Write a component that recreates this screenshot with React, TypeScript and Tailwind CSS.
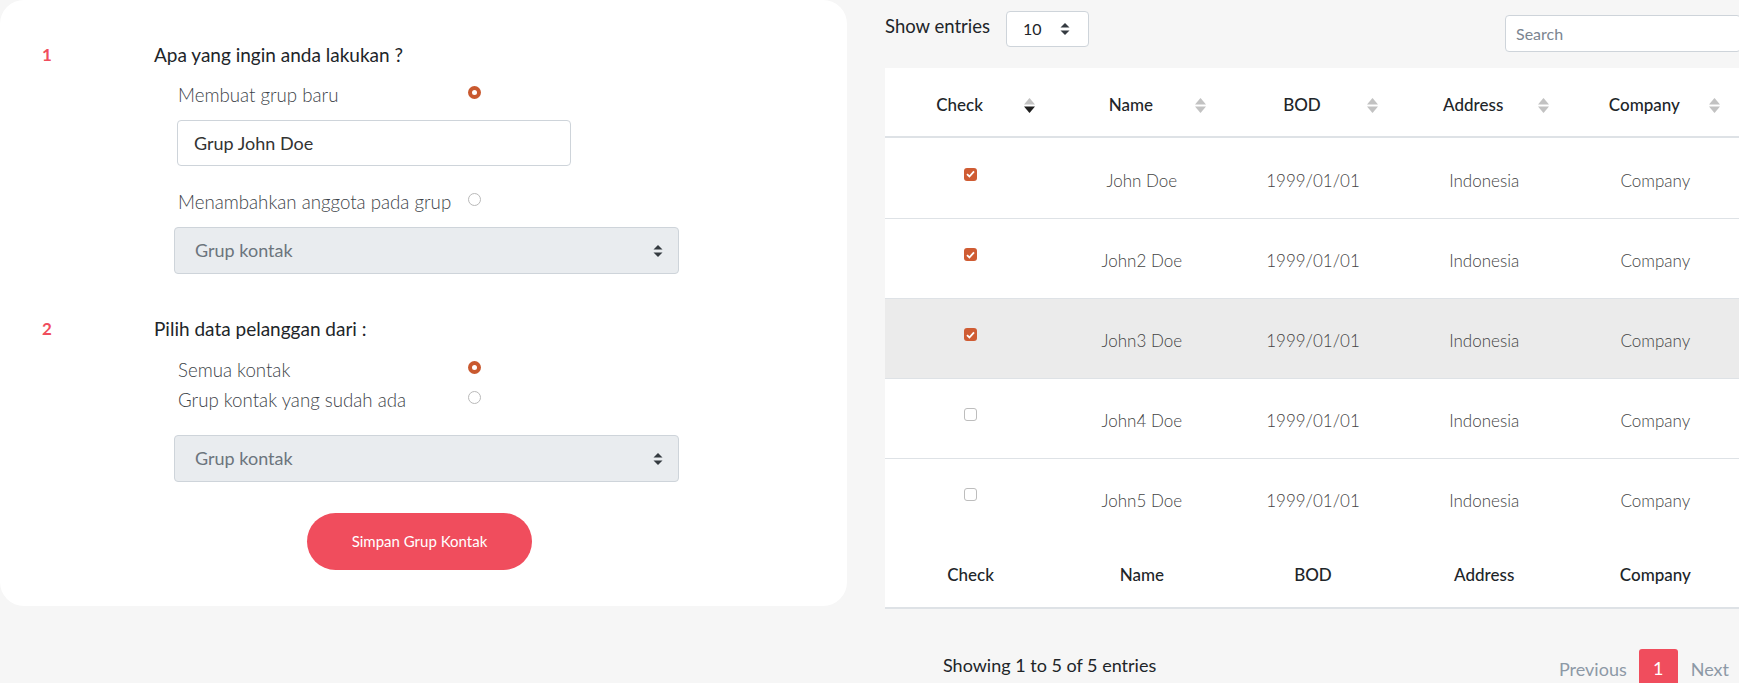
import React from 'react';

const rows = [
  { name: 'John Doe', checked: true },
  { name: 'John2 Doe', checked: true },
  { name: 'John3 Doe', checked: true, hover: true },
  { name: 'John4 Doe', checked: false },
  { name: 'John5 Doe', checked: false },
];

const columns = ['Check', 'Name', 'BOD', 'Address', 'Company'];

const SortIcon = ({ active }: { active?: boolean }) => (
  <svg width="11" height="17" viewBox="0 0 11 17">
    <path d="M5.5 1 L11 7.5 L0 7.5 Z" fill="#c2c2c2" />
    <path d="M0 9.5 L11 9.5 L5.5 16 Z" fill={active ? '#1f1f1f' : '#c2c2c2'} />
  </svg>
);

const SelectArrow = () => (
  <svg width="10" height="14" viewBox="0 0 10 14">
    <path d="M5 1 L9.5 5.5 L0.5 5.5 Z" fill="#343a40" />
    <path d="M0.5 8.5 L9.5 8.5 L5 13 Z" fill="#343a40" />
  </svg>
);

const Radio = ({ checked }: { checked?: boolean }) =>
  checked ? (
    <span className="mt-[3px] flex h-[13px] w-[13px] items-center justify-center rounded-full bg-[#c9592f]">
      <span className="h-[5px] w-[5px] rounded-full bg-white" />
    </span>
  ) : (
    <span className="mt-[3px] h-[13px] w-[13px] rounded-full border border-[#b9b9b9] bg-white" />
  );

const Checkbox = ({ checked }: { checked?: boolean }) =>
  checked ? (
    <span className="flex h-[13px] w-[13px] items-center justify-center rounded-[3px] bg-[#cf5c33]">
      <svg width="9" height="8" viewBox="0 0 9 8">
        <path d="M1 4.2 L3.4 6.5 L8 1.3" stroke="white" strokeWidth="1.8" fill="none" />
      </svg>
    </span>
  ) : (
    <span className="h-[13px] w-[13px] rounded-[3px] border border-[#bdbdbd] bg-white" />
  );

const OptionRow = ({ label, checked }: { label: string; checked?: boolean }) => (
  <div className="flex h-6 items-start">
    <span className="w-[290px] text-[18.7px] leading-6 font-light text-[#3d4349]">{label}</span>
    <Radio checked={checked} />
  </div>
);

const GroupSelect = () => (
  <div className="flex h-[47px] w-[505px] items-center justify-between rounded-[4px] border border-[#ced4da] bg-[#e9ecef] pl-5 pr-[15px]">
    <span className="text-[18px] text-[#6c757d]">Grup kontak</span>
    <SelectArrow />
  </div>
);

export default function App() {
  return (
    <div className="flex h-[683px] w-[1739px] overflow-hidden bg-[#f6f6f6] font-['Lato',sans-serif] text-[#212529]">
      <div className="h-[606px] w-[847px] shrink-0 rounded-[24px] bg-white pt-[43px] pl-[42px]">
        <div className="flex">
          <span className="w-[112px] text-[17px] leading-6 font-bold text-[#f04d5d]">1</span>
          <div className="flex flex-col">
            <span className="text-[19px] leading-6">Apa yang ingin anda lakukan ?</span>
            <div className="mt-4 pl-6">
              <OptionRow label="Membuat grup baru" checked />
              <div className="mt-[13px] -ml-px flex h-[46px] w-[394px] items-center rounded-[4px] border border-[#ced4da] px-4 text-[18px] text-[#333]">
                Grup John Doe
              </div>
              <div className="mt-6">
                <OptionRow label="Menambahkan anggota pada grup" />
              </div>
              <div className="mt-[13px] -ml-1">
                <GroupSelect />
              </div>
            </div>
          </div>
        </div>

        <div className="mt-[43px] flex">
          <span className="w-[112px] text-[17px] leading-6 font-bold text-[#f04d5d]">2</span>
          <div className="flex flex-col">
            <span className="text-[19px] leading-6">Pilih data pelanggan dari :</span>
            <div className="mt-[17px] pl-6">
              <OptionRow label="Semua kontak" checked />
              <div className="mt-[6px]">
                <OptionRow label="Grup kontak yang sudah ada" />
              </div>
              <div className="mt-[23px] -ml-1">
                <GroupSelect />
              </div>
              <button className="mt-[31px] ml-[129px] flex h-[57px] w-[225px] items-center justify-center rounded-full bg-[#f04d5d] text-[15px] text-white">
                Simpan Grup Kontak
              </button>
            </div>
          </div>
        </div>
      </div>

      <div className="ml-[38px] flex w-[856px] shrink-0 flex-col">
        <div className="flex h-[68px] shrink-0 items-start">
          <div className="mt-[11px] flex items-center">
            <span className="mr-[16px] -mt-1 text-[18.5px]">Show entries</span>
            <div className="flex h-[36px] w-[83px] items-center justify-between rounded-[4px] border border-[#ced4da] bg-white pl-4 pr-[18px] text-[16px]">
              <span>10</span>
              <SelectArrow />
            </div>
          </div>
          <div className="mt-[15px] ml-auto flex h-[37px] w-[236px] items-center rounded-[4px] border border-[#ced4da] bg-white px-[10px] text-[16px] text-[#7b8591]">
            Search
          </div>
        </div>

        <div className="shrink-0 bg-white">
          <div className="grid h-[70px] grid-cols-5 border-b-2 border-[#dee2e6]">
            {columns.map((c, i) => (
              <div key={c} className="flex items-center pt-[6px] pr-[21px] pl-[10px]">
                <span className="flex-1 text-center text-[17px] font-medium">{c}</span>
                <SortIcon active={i === 0} />
              </div>
            ))}
          </div>
          {rows.map((r, idx) => (
            <div
              key={r.name}
              className={`grid h-[80px] grid-cols-5 text-[17px] font-light text-[#444] ${idx > 0 ? 'border-t border-[#dee2e6]' : ''} ${r.hover ? 'bg-[#ebebeb]' : ''}`}
            >
              <div className="flex items-center justify-center pb-2">
                <Checkbox checked={r.checked} />
              </div>
              <div className="flex items-center justify-center pt-[5px]">{r.name}</div>
              <div className="flex items-center justify-center pt-[5px]">1999/01/01</div>
              <div className="flex items-center justify-center pt-[5px]">Indonesia</div>
              <div className="flex items-center justify-center pt-[5px]">Company</div>
            </div>
          ))}
          <div className="grid h-[71px] grid-cols-5 border-b-2 border-[#dee2e6]">
            {columns.map((c) => (
              <div key={c} className="flex items-center justify-center pt-1 text-[17px] font-medium">
                {c}
              </div>
            ))}
          </div>
        </div>

        <div className="mt-[40px] flex shrink-0 items-start justify-between pr-[12px]">
          <span className="mt-[3px] pl-[58px] text-[18px]">Showing 1 to 5 of 5 entries</span>
          <div className="flex items-start text-[18px] text-[#8d99a6]">
            <span className="mt-[7px] mr-[12px]">Previous</span>
            <span className="flex h-[38px] w-[39px] items-center justify-center rounded-[3px] bg-[#f04d5d] text-white">1</span>
            <span className="mt-[7px] ml-[13px]">Next</span>
          </div>
        </div>
      </div>
    </div>
  );
}
